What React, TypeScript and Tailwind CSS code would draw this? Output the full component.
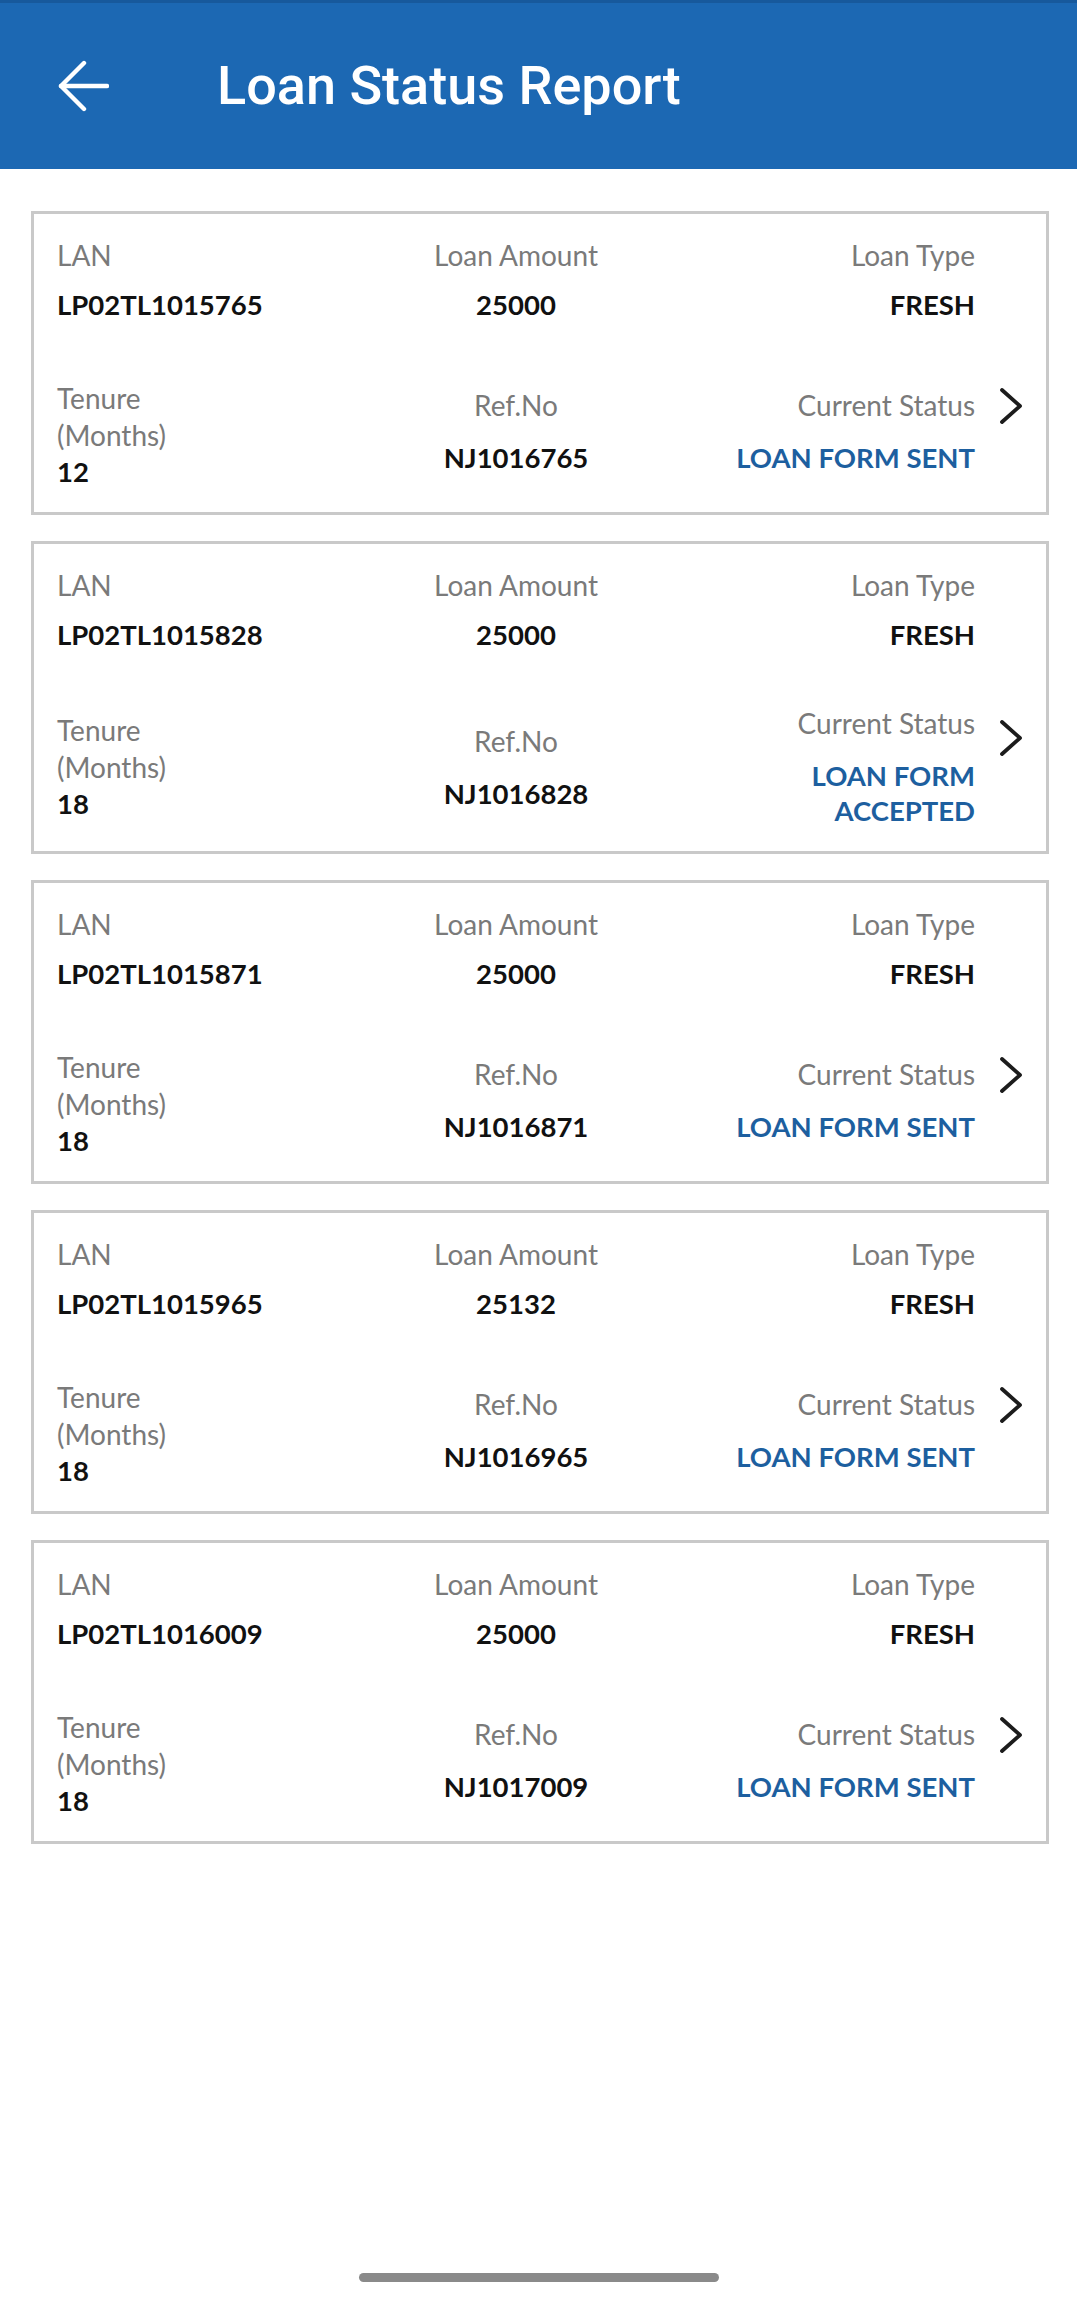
type Loan = {
  lan: string;
  amount: string;
  type: string;
  tenure: string;
  refNo: string;
  status: string;
  wrapped?: boolean;
};

const loans: Loan[] = [
  { lan: "LP02TL1015765", amount: "25000", type: "FRESH", tenure: "12", refNo: "NJ1016765", status: "LOAN FORM SENT" },
  { lan: "LP02TL1015828", amount: "25000", type: "FRESH", tenure: "18", refNo: "NJ1016828", status: "LOAN FORM ACCEPTED", wrapped: true },
  { lan: "LP02TL1015871", amount: "25000", type: "FRESH", tenure: "18", refNo: "NJ1016871", status: "LOAN FORM SENT" },
  { lan: "LP02TL1015965", amount: "25132", type: "FRESH", tenure: "18", refNo: "NJ1016965", status: "LOAN FORM SENT" },
  { lan: "LP02TL1016009", amount: "25000", type: "FRESH", tenure: "18", refNo: "NJ1017009", status: "LOAN FORM SENT" },
];

function BackArrow() {
  return (
    <svg width="52" height="52" viewBox="0 0 52 52" fill="none">
      <line x1="4" y1="26" x2="50" y2="26" stroke="white" strokeWidth="4.4" strokeLinecap="round" />
      <polyline
        points="27,3 4,26 27,49"
        stroke="white"
        strokeWidth="4.4"
        strokeLinecap="round"
        strokeLinejoin="round"
      />
    </svg>
  );
}

function Chevron() {
  return (
    <svg width="24" height="36" viewBox="0 0 24 36" fill="none" className="mb-[58px]">
      <polyline
        points="3,2 21,18 3,34"
        stroke="#1c1c1c"
        strokeWidth="3.8"
        strokeLinecap="round"
        strokeLinejoin="round"
      />
    </svg>
  );
}

function LoanCard({ loan }: { loan: Loan }) {
  const label = "text-[28px] leading-[37px] text-[#7a7a7a]";
  const value = "text-[27.5px] leading-[35px] font-bold text-[#111111]";

  return (
    <div className="border-[3px] border-[#c9c9c9] bg-white pl-[23px] pt-[23px] pb-[23px] flex">
      <div className="flex-1">
        {/* Top row */}
        <div className="grid grid-cols-3">
          <div>
            <p className={label}>LAN</p>
            <p className={`${value} mt-[13px]`}>{loan.lan}</p>
          </div>
          <div className="text-center">
            <p className={label}>Loan Amount</p>
            <p className={`${value} mt-[13px]`}>{loan.amount}</p>
          </div>
          <div className="text-right">
            <p className={label}>Loan Type</p>
            <p className={`${value} mt-[13px]`}>{loan.type}</p>
          </div>
        </div>

        {/* Bottom row */}
        <div className={`grid grid-cols-3 items-center ${loan.wrapped ? "mt-[53px]" : "mt-[58px]"}`}>
          <div>
            <p className={label}>Tenure</p>
            <p className={label}>(Months)</p>
            <p className={value}>{loan.tenure}</p>
          </div>
          <div className={`text-center ${loan.wrapped ? "" : "mb-[8px]"}`}>
            <p className={label}>Ref.No</p>
            <p className={`${value} mt-[16px]`}>{loan.refNo}</p>
          </div>
          <div className={`text-right ${loan.wrapped ? "" : "mb-[8px]"}`}>
            <p className={label}>Current Status</p>
            <p className="mt-[16px] ml-auto max-w-[260px] text-[27.5px] leading-[35px] font-bold text-[#1d5f9f]">
              {loan.status}
            </p>
          </div>
        </div>
      </div>
      <div className="w-[71px] flex items-end justify-center">
        <div className={`flex items-center ${loan.wrapped ? "h-[123px]" : "h-[108px]"}`}>
          <Chevron />
        </div>
      </div>
    </div>
  );
}

export default function App() {
  return (
    <div
      className="w-[1077px] min-h-[2300px] bg-white flex flex-col"
      style={{ fontFamily: "Lato, 'Open Sans', sans-serif" }}
    >
      {/* Header */}
      <header className="h-[169px] bg-[#1c68b3] border-t-[3px] border-[#17599c] flex items-center shrink-0">
        <div className="w-[217px] pl-[57px] flex items-center">
          <BackArrow />
        </div>
        <h1
          className="text-white text-[54px] font-medium leading-none"
          style={{ fontFamily: "Roboto, sans-serif" }}
        >
          Loan Status Report
        </h1>
      </header>

      {/* Cards */}
      <div className="pl-[31px] pr-[28px] pt-[42px] flex flex-col gap-[26px]">
        {loans.map((loan) => (
          <LoanCard key={loan.lan} loan={loan} />
        ))}
      </div>

      {/* Home indicator */}
      <div className="mt-auto pb-[18px] flex justify-center">
        <div className="w-[360px] h-[9px] rounded-full bg-[#8a8a8a]" />
      </div>
    </div>
  );
}
